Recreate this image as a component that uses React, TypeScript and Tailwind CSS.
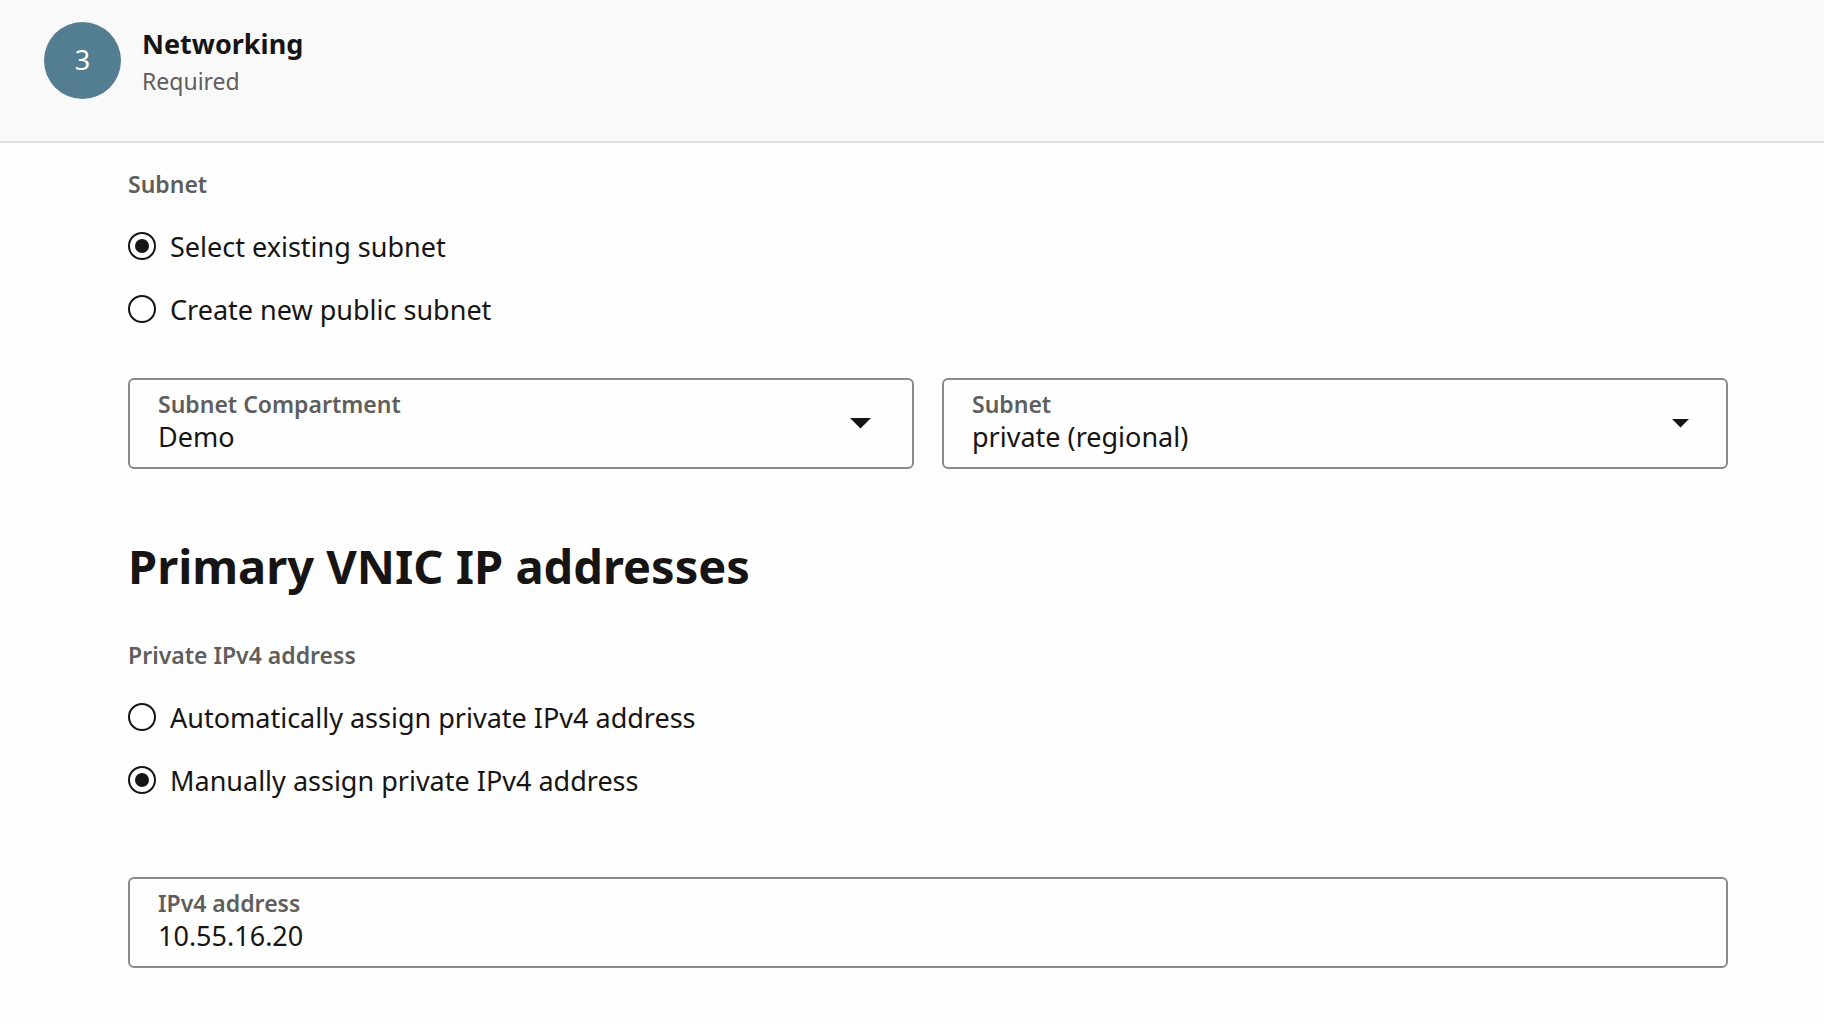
import { useState } from "react";
import type { ReactNode } from "react";

type RadioProps = {
  name: string;
  label: string;
  checked: boolean;
  onSelect: () => void;
};

function Radio({ name, label, checked, onSelect }: RadioProps) {
  return (
    <label className="flex h-7 cursor-pointer items-center gap-3.5 whitespace-nowrap text-[27px] leading-7">
      <input
        type="radio"
        name={name}
        checked={checked}
        onChange={onSelect}
        className="grid size-7 shrink-0 appearance-none place-content-center rounded-full border-2 border-[#161513] bg-white before:size-3.5 before:rounded-full before:content-[''] checked:before:bg-[#161513]"
      />
      <span className="pt-0.5">{label}</span>
    </label>
  );
}

function RadioGroup({
  legend,
  name,
  options,
  initial,
}: {
  legend: string;
  name: string;
  options: string[];
  initial: string;
}) {
  const [value, setValue] = useState(initial);
  return (
    <fieldset>
      <legend className="text-[23px] leading-8 font-semibold text-[#5f5e5c]">
        {legend}
      </legend>
      <div className="flex flex-col gap-[35px] pt-8">
        {options.map((option) => (
          <Radio
            key={option}
            name={name}
            label={option}
            checked={value === option}
            onSelect={() => setValue(option)}
          />
        ))}
      </div>
    </fieldset>
  );
}

function Field({
  id,
  label,
  children,
}: {
  id: string;
  label: string;
  children: ReactNode;
}) {
  return (
    <div className="relative flex-1 rounded-md border-2 border-[#8b8a89] bg-[#fefefe]">
      <label
        htmlFor={id}
        className="pointer-events-none absolute top-2 left-7 text-[23px] leading-8 font-semibold text-[#5f5e5c]"
      >
        {label}
      </label>
      {children}
    </div>
  );
}

function SelectField({
  id,
  label,
  value,
  small = false,
}: {
  id: string;
  label: string;
  value: string;
  small?: boolean;
}) {
  return (
    <Field id={id} label={label}>
      <select
        id={id}
        defaultValue={value}
        className="block w-full appearance-none bg-transparent pt-[39px] pr-20 pb-3 pl-7 text-[27px] leading-9 outline-none"
      >
        <option value={value}>{value}</option>
      </select>
      <svg
        viewBox="0 0 20 10"
        aria-hidden="true"
        className={
          small
            ? "pointer-events-none absolute top-[39px] right-[37px] w-[17px] fill-[#161513]"
            : "pointer-events-none absolute top-[38px] right-[41px] w-[21px] fill-[#161513]"
        }
      >
        <path d="M0 0h20L10 10z" />
      </svg>
    </Field>
  );
}

export default function App() {
  return (
    <div className="min-h-screen bg-[#fefefe] font-['Noto_Sans',sans-serif] text-[#161513]">
      <header className="flex items-start gap-[21px] border-b-2 border-[#e2e2e1] bg-[#f9f9f9] px-11 pt-[22px] pb-[42px]">
        <div className="flex size-[77px] items-center justify-center rounded-full bg-[#537d91] text-[27px] text-white">
          3
        </div>
        <div>
          <h1 className="text-[27px] leading-[43px] font-bold">Networking</h1>
          <p className="text-[23px] leading-8 text-[#5f5e5c]">Required</p>
        </div>
      </header>

      <main className="pr-24 pl-32">
        <div className="pt-[25px]">
          <RadioGroup
            legend="Subnet"
            name="subnet-mode"
            options={["Select existing subnet", "Create new public subnet"]}
            initial="Select existing subnet"
          />
        </div>

        <div className="mt-[55px] flex gap-7">
          <SelectField id="compartment" label="Subnet Compartment" value="Demo" />
          <SelectField id="subnet" label="Subnet" value="private (regional)" small />
        </div>

        <h2 className="mt-[65px] text-[47px] leading-[64px] font-bold">
          Primary VNIC IP addresses
        </h2>

        <div className="mt-[41px]">
          <RadioGroup
            legend="Private IPv4 address"
            name="ipv4-mode"
            options={[
              "Automatically assign private IPv4 address",
              "Manually assign private IPv4 address",
            ]}
            initial="Manually assign private IPv4 address"
          />
        </div>

        <div className="mt-[83px] flex">
          <Field id="ipv4" label="IPv4 address">
            <input
              id="ipv4"
              type="text"
              defaultValue="10.55.16.20"
              className="block w-full bg-transparent pt-[39px] pr-7 pb-3 pl-7 text-[27px] leading-9 outline-none"
            />
          </Field>
        </div>
      </main>
    </div>
  );
}
